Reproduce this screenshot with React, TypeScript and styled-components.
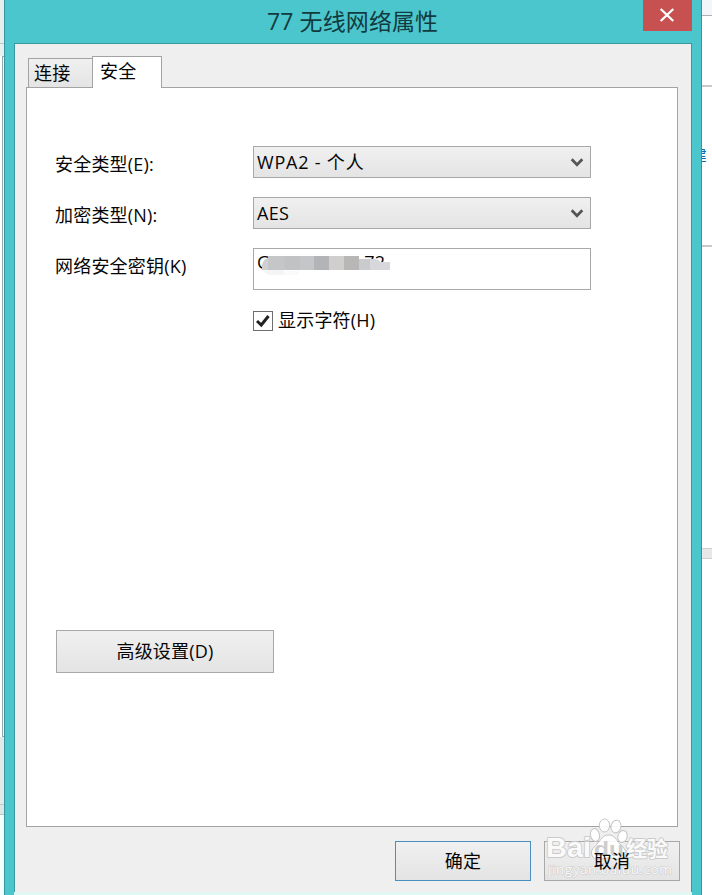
import React from "react";
import styled, { createGlobalStyle } from "styled-components";

const GlobalStyle = createGlobalStyle`
  *, *::before, *::after { box-sizing: border-box; }
  html, body { margin: 0; padding: 0; overflow: hidden; }
  body { font-family: "Open Sans", "Noto Sans CJK SC", sans-serif; font-size: 18px; letter-spacing: 0.2px; color: #050505; }
`;

const Desktop = styled.div`
  width: 712px;
  height: 895px;
  display: grid;
  grid-template-columns: 4px 698px 10px;
  overflow: hidden;
  background: #fff;
`;

const BackgroundEdge = styled.div`
  display: flex;
  flex-direction: column;
  overflow: hidden;
`;

const Strip = styled.div<{ $h: number; $color: string }>`
  flex: 0 0 ${(p) => p.$h}px;
  background: ${(p) => p.$color};
`;

const BackWindowSide = styled.div`
  flex: 0 0 681px;
  margin-left: 2px;
  border: 1px solid #93a9ab;
  border-right: 0;
  background: #f1fdfd;
`;

const LinkPeek = styled.div`
  flex: 0 0 158px;
  padding-top: 59px;
  display: flex;
  justify-content: flex-end;
  align-items: flex-start;
  font-size: 16px;
  line-height: 18px;
  color: #1769ad;
  padding-right: 5px;
`;

const Dialog = styled.section`
  height: 895px;
  display: flex;
  flex-direction: column;
  background: #4cc6cd;
  border: solid #3795a0;
  border-width: 0 1px;
`;

const TitleBar = styled.header`
  height: 43px;
  display: grid;
  grid-template-columns: 1fr 49px;
  padding-right: 9px;
`;

const Title = styled.h1`
  margin: 0;
  padding-left: 262px;
  font-size: 23px;
  font-weight: 400;
  line-height: 43px;
  letter-spacing: 0.1px;
  color: #123b40;
  white-space: nowrap;
`;

const CloseButton = styled.button`
  width: 49px;
  height: 31px;
  border: 0;
  padding: 0 2px 2px 0;
  background: #c75050;
  display: flex;
  align-items: center;
  justify-content: center;
`;

const Client = styled.main`
  flex: 0 0 849px;
  margin: 0 9px;
  border: 1px solid #3c98a0;
  border-bottom: 0;
  background: #efefef;
  padding: 12px 13px 0 11px;
`;

const BottomEdge = styled.div`
  flex: 1;
  margin: 0 9px;
  background: #e0f7f3;
`;

const Tabs = styled.div`
  height: 31px;
  display: flex;
  align-items: flex-end;
  padding-left: 2px;
`;

const Tab = styled.div<{ $active?: boolean }>`
  width: ${(p) => (p.$active ? 70 : 64)}px;
  height: ${(p) => (p.$active ? 32 : 29)}px;
  margin-bottom: ${(p) => (p.$active ? -1 : 0)}px;
  border: 1px solid #a3a3a3;
  border-bottom: 0;
  border-right-width: ${(p) => (p.$active ? 1 : 0)}px;
  padding-left: ${(p) => (p.$active ? 7 : 5)}px;
  line-height: 29px;
  background: ${(p) => (p.$active ? "#fff" : "linear-gradient(#f0f0f0, #e4e4e4)")};
  z-index: ${(p) => (p.$active ? 1 : 0)};
`;

const Page = styled.div`
  height: 740px;
  border: 1px solid #a3a3a3;
  background: #fff;
  padding: 58px 0 0 28px;
`;

const Form = styled.div`
  display: grid;
  grid-template-columns: 198px 338px;
  row-gap: 19px;
`;

const Label = styled.label`
  line-height: 36px;
  height: 32px;
  white-space: nowrap;
`;

const Select = styled.div<{ $spacing: number }>`
  height: 32px;
  border: 1px solid #a8a8a8;
  background: linear-gradient(#f0f0f0, #e4e4e4);
  display: flex;
  align-items: center;
  justify-content: space-between;
  padding: 0 6px 0 3px;
  line-height: 30px;
  letter-spacing: ${(p) => p.$spacing}px;
`;

const KeyField = styled.div`
  height: 42px;
  border: 1px solid #a8a8a8;
  position: relative;
  padding-left: 3px;
  display: flex;
  gap: 94px;
  line-height: 27px;
`;

const Mosaic = styled.svg`
  position: absolute;
  left: 8px;
  top: 7px;
`;

const CheckRow = styled.label`
  display: flex;
  align-items: center;
  gap: 5px;
  height: 24px;
  line-height: 22px;
  margin: 19px 0 0 198px;
`;

const CheckBox = styled.span`
  width: 20px;
  height: 20px;
  border: 1px solid #6f6f6f;
  display: flex;
  align-items: center;
  justify-content: center;
`;

const CheckText = styled.span`
  height: 24px;
`;

const Button = styled.button<{ $w: number; $h: number; $primary?: boolean }>`
  width: ${(p) => p.$w}px;
  height: ${(p) => p.$h}px;
  border: 1px solid ${(p) => (p.$primary ? "#4a8fbd" : "#a8a8a8")};
  background: linear-gradient(#f0f0f0, #e4e4e4);
  font: inherit;
  letter-spacing: inherit;
  color: #050505;
  padding: 0 0 3px;
  position: relative;
`;

const Advanced = styled.div`
  margin: 297px 0 0 1px;
  display: flex;
`;

const Footer = styled.footer`
  display: flex;
  justify-content: flex-end;
  gap: 13px;
  padding-top: 14px;
  margin-right: -2px;
`;

const Watermark = styled.svg`
  position: absolute;
  left: -5px;
  top: -26px;
`;

const Caption = styled.span`
  position: relative;
`;

const Chevron = () => (
  <svg width="14" height="11" viewBox="0 0 14 11">
    <path d="M1.7 2.2 L7 7.7 L12.3 2.2" fill="none" stroke="#555" strokeWidth="2.7" />
  </svg>
);

const MOSAIC = [
  ["#c5c6c7", 17], ["#c1c2c4", 15], ["#c4c6c7", 14], ["#b3b4b8", 15],
  ["#d0cfce", 15], ["#b9b7b6", 15], ["#c9cbce", 15],
] as const;

const KeyMosaic = () => {
  let x = 6;
  return (
    <Mosaic width="130" height="22" viewBox="0 0 130 22">
      <path d="M1 12h21v7H8Q3 18 1 14z" fill="#f5f5f5" />
      <path d="M22 15h15v4H22z" fill="#fafafa" />
      <path d="M0 14V9Q1 2 9 1v13z" fill="#d0d0d0" />
      {MOSAIC.map(([color, w], i) => {
        const left = x;
        x += w;
        return <rect key={i} x={left} y={i === 6 ? 3 : 0} width={w} height={i === 6 ? 11 : 14} fill={color} />;
      })}
      <path d="M108 3h5q5 1 5 3h10v8h-20z" fill="#d8d8dc" />
    </Mosaic>
  );
};

const BaiduMark = () => (
  <Watermark width="138" height="68" viewBox="0 0 138 68">
    <g fill="#fff" fillOpacity=".9" stroke="#c4c4c4" strokeWidth="1">
      <ellipse cx="55" cy="19" rx="4.5" ry="6.5" transform="rotate(-12 55 19)" />
      <ellipse cx="64.5" cy="9.500" rx="5.2" ry="6.5" />
      <ellipse cx="76" cy="10.500" rx="5" ry="6.3" transform="rotate(12 76 10.5)" />
      <ellipse cx="82.5" cy="20.500" rx="4.6" ry="6" transform="rotate(18 82.5 20.5)" />
      <path d="M69 19c-7 0-8 5-12 9s-8 8-4 13c4 5 9 1 16 1s12 4 16-1c3-5-1-9-5-13s-5-9-11-9z" />
    </g>
    <g fontWeight="700" stroke="#cacaca" strokeWidth="1.800" strokeLinejoin="round" paintOrder="stroke" fill="#fafafa" letterSpacing="0">
      <text x="6" y="41" fontFamily="Liberation Sans" fontSize="28" textLength="45" lengthAdjust="spacingAndGlyphs">Bai</text>
      <text x="86" y="40" fontFamily="Noto Sans CJK SC, sans-serif" fontSize="21">经验</text>
    </g>
    <text x="54" y="40" fontFamily="Liberation Sans" fontWeight="700" fontSize="21" textLength="30" lengthAdjust="spacingAndGlyphs" fill="#cdcdcd" letterSpacing="0">du</text>
    <text x="8" y="58" fontFamily="Open Sans" fontSize="13.500" textLength="124" fill="#f8f8f8" stroke="#cecece" strokeWidth="1.200" paintOrder="stroke">jingyan.baidu.com</text>
  </Watermark>
);

export default function App() {
  return (
    <>
      <GlobalStyle />
      <Desktop>
        <BackgroundEdge>
          <Strip $h={43} $color="#e6eeee" />
          <Strip $h={1} $color="#bcc9ca" />
          <Strip $h={12} $color="#e9f0f0" />
          <BackWindowSide />
          <Strip $h={67} $color="#e1eae8" />
          <Strip $h={1} $color="#bccac9" />
          <Strip $h={9} $color="#dde7e5" />
          <Strip $h={1} $color="#b3c3c2" />
          <Strip $h={80} $color="#f1fffd" />
        </BackgroundEdge>
        <Dialog>
          <TitleBar>
            <Title>77 无线网络属性</Title>
            <CloseButton aria-label="关闭">
              <svg width="16" height="14" viewBox="0 0 16 14">
                <path d="M1.700 1 L14.300 13 M14.300 1 L1.700 13" stroke="#fff" strokeWidth="2.300" />
              </svg>
            </CloseButton>
          </TitleBar>
          <Client>
            <Tabs>
              <Tab>连接</Tab>
              <Tab $active>安全</Tab>
            </Tabs>
            <Page>
              <Form>
                <Label>安全类型(E):</Label>
                <Select $spacing={0.8}>WPA2 - 个人<Chevron /></Select>
                <Label>加密类型(N):</Label>
                <Select $spacing={0.3}>AES<Chevron /></Select>
                <Label>网络安全密钥(K)</Label>
                <KeyField>
                  <span>G</span>
                  <span>72</span>
                  <KeyMosaic />
                </KeyField>
              </Form>
              <CheckRow>
                <CheckBox>
                  <svg width="16" height="14" viewBox="0 0 16 14">
                    <path d="M2 7 L6.300 11 L13.500 2" fill="none" stroke="#222" strokeWidth="3" />
                  </svg>
                </CheckBox>
                <CheckText>显示字符(H)</CheckText>
              </CheckRow>
              <Advanced>
                <Button $w={218} $h={43}>高级设置(D)</Button>
              </Advanced>
            </Page>
            <Footer>
              <Button $w={136} $h={40} $primary>确定</Button>
              <Button $w={136} $h={40}>
                <BaiduMark />
                <Caption>取消</Caption>
              </Button>
            </Footer>
          </Client>
          <BottomEdge />
        </Dialog>
        <BackgroundEdge>
          <Strip $h={15} $color="#f3f6f8" />
          <Strip $h={1} $color="#b0b0b0" />
          <Strip $h={69} $color="#fff" />
          <Strip $h={2} $color="#cacaca" />
          <LinkPeek>建</LinkPeek>
          <Strip $h={2} $color="#cacaca" />
          <Strip $h={301} $color="#fff" />
          <Strip $h={1} $color="#cfcfcf" />
          <Strip $h={9} $color="#e8e8e8" />
          <Strip $h={1} $color="#cfcfcf" />
        </BackgroundEdge>
      </Desktop>
    </>
  );
}
